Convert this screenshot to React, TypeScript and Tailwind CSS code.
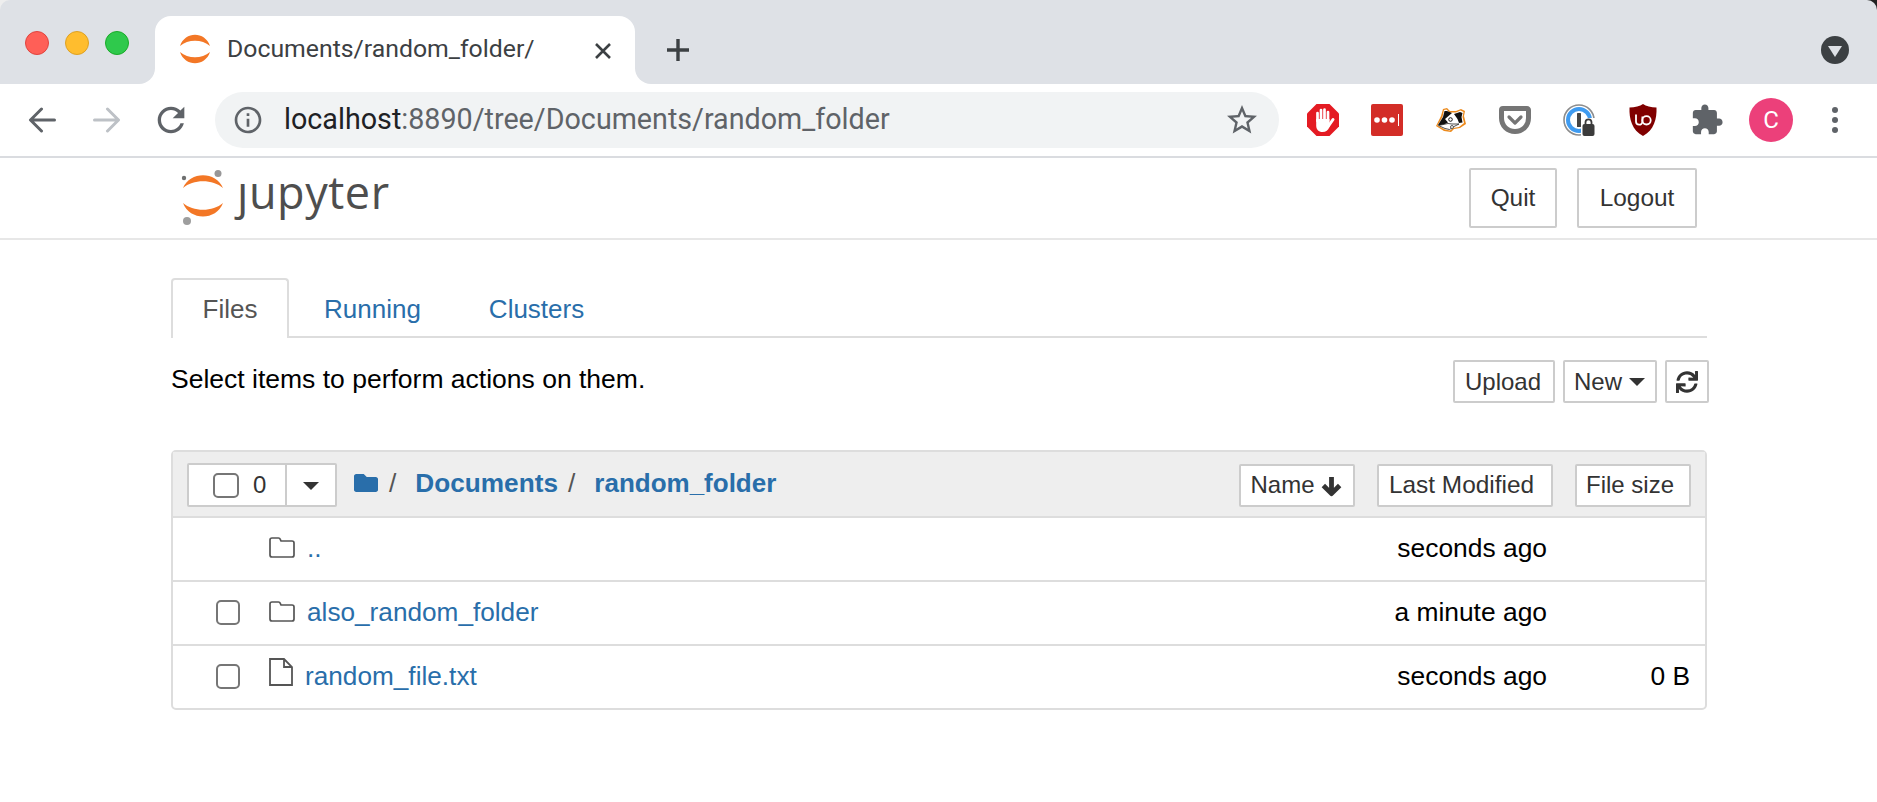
import React from "react";
import { FaSync, FaFolder } from "react-icons/fa";

const Arcs = () => (
  <svg viewBox="0 0 30 30" className="w-[30px] h-[30px]">
    <path d="M0 12C5 -3 25 -3 30 12C22 5 8 5 0 12Z" fill="#f37726" />
    <path d="M0 18C8 25 22 25 30 18C25 33 5 33 0 18Z" fill="#f37726" />
  </svg>
);

const Logo = () => (
  <svg viewBox="0 0 46 56" className="w-[46px] h-[56px]">
    <path d="M3 18C10 1 36 1 43 18C33 9 13 9 3 18Z" fill="#f37726" />
    <path d="M3 33C13 42 33 42 43 33C36 51 10 51 3 33Z" fill="#f37726" />
    <circle cx="38" cy="3.5" r="3.5" fill="#989798" />
    <circle cx="4" cy="8" r="2.2" fill="#6f7070" />
    <circle cx="7" cy="51" r="4" fill="#9e9e9e" />
  </svg>
);

const AdBlock = () => (
  <svg viewBox="0 0 32 32" className="w-8 h-8">
    <path d="M9.5 0H22.5L32 9.5V22.5L22.5 32H9.5L0 22.5V9.5Z" fill="#e41b23" />
    <g stroke="#fff" strokeWidth="2.7" strokeLinecap="round" fill="none">
      <path d="M10.5 17V9M14 16V6M17.5 16V5.5M21 17V8" />
      <path d="M21.5 22L26 15.5" strokeWidth="3" />
    </g>
    <path d="M9.2 15H22.5V23C21 26.5 19 28 15.5 28C11.5 28 9.2 25.5 9.2 21.5Z" fill="#fff" />
  </svg>
);

const LastPass = () => (
  <svg viewBox="0 0 32 32" className="w-8 h-8">
    <rect width="32" height="32" rx="2" fill="#d32d27" />
    <circle cx="6" cy="16" r="2.8" fill="#fff" />
    <circle cx="13.5" cy="16" r="2.8" fill="#fff" />
    <circle cx="21" cy="16" r="2.8" fill="#fff" />
    <rect x="27" y="10" width="1" height="12" fill="#fff" />
  </svg>
);

const Badger = () => (
  <svg viewBox="0 0 32 26" className="w-8 h-[26px]">
    <path d="M1 19L6 9L8 2L12 1L15 4L21 4L26 2L30 4L29 9L31 17L25 21L19 22L16 25L9 24Z" fill="#ec8a1c" />
    <path d="M2.5 18.5L7.5 10L9 3L11.5 2.5L14.5 5.5L21 5.5L25.5 3.5L28.5 5L27.5 10L29 16L24 20L18 21L15 23.5L10 22.5Z" fill="#fff" />
    <path d="M3 18L8 10L9.5 4L12 4L17 6L10 12L13 15.5L8 18Z" fill="#111" />
    <path d="M19 7L25 5L27.5 6L26.5 10L27.5 15.5L24 16L22.5 12Z" fill="#111" />
    <path d="M3.5 18.5L13 16.5L17 17L24 17L18 20L14.5 22.5L10 21.5Z" fill="#fff" stroke="#222" strokeWidth="0.8" />
    <circle cx="15.5" cy="12.5" r="1.8" fill="#fff" stroke="#111" />
    <circle cx="17" cy="20" r="1.5" fill="#fff" stroke="#555" />
  </svg>
);

const Pocket = () => (
  <svg viewBox="0 0 32 28" className="w-8 h-7">
    <path d="M4 2.5H28A1.5 1.5 0 0 1 29.5 4V12C29.5 20 23.5 25.5 16 25.5C8.5 25.5 2.5 20 2.5 12V4A1.5 1.5 0 0 1 4 2.5Z" fill="none" stroke="#757575" strokeWidth="5" />
    <path d="M10 11L16 17L22 11" fill="none" stroke="#757575" strokeWidth="3.2" strokeLinecap="round" strokeLinejoin="round" />
  </svg>
);

const OnePass = () => (
  <svg viewBox="0 0 32 32" className="w-8 h-8">
    <circle cx="16" cy="16" r="15" fill="#fff" stroke="#8c8c8c" strokeWidth="1.6" />
    <circle cx="16" cy="16" r="11" fill="none" stroke="#3f9bf0" strokeWidth="4" />
    <rect x="14" y="9" width="4" height="14" rx="0.5" fill="#444" />
    <rect x="18" y="14" width="14" height="18" fill="#fff" />
    <path d="M22.5 20V18.3A3 3 0 0 1 28.5 18.3V20" fill="none" stroke="#3b3b3b" strokeWidth="1.8" />
    <rect x="19.5" y="20" width="12" height="12" rx="2" fill="#3b3b3b" />
  </svg>
);

const UBlock = () => (
  <svg viewBox="0 0 28 32" className="w-7 h-8">
    <path d="M14 0C17 2 22 3.5 27.5 3.5C28 15 25 26 14 32C3 26 0 15 0.5 3.5C6 3.5 11 2 14 0Z" fill="#800000" />
    <path d="M7 10.5V17.5A3.2 3.2 0 0 0 13.4 17.5V12.5" fill="none" stroke="#fff" strokeWidth="1.8" />
    <circle cx="17.5" cy="16.3" r="4.2" fill="none" stroke="#fff" strokeWidth="1.8" />
  </svg>
);

const G = ({ d, fill = "#5f6368", cls }: { d: string; fill?: string; cls: string }) => (
  <svg viewBox="0 0 24 24" className={cls}>
    <path d={d} fill={fill} />
  </svg>
);

const Arrow = ({ color, flip }: { color: string; flip?: boolean }) => (
  <svg viewBox="0 0 28 26" className={flip ? "w-7 h-[26px] -scale-x-100" : "w-7 h-[26px]"}>
    <path d="M26.5 13H3M13.5 2L2.5 13L13.5 24" fill="none" stroke={color} strokeWidth="3" strokeLinecap="round" strokeLinejoin="round" />
  </svg>
);

const FolderO = () => (
  <svg viewBox="0 0 26 21" className="w-[26px] h-[21px]">
    <path d="M3 1H9.5C10.5 1 11 1.6 11.3 2.4L12 4H23C24.2 4 25 4.8 25 6V18C25 19.2 24.2 20 23 20H3C1.8 20 1 19.2 1 18V3C1 1.8 1.8 1 3 1Z" fill="none" stroke="#555" strokeWidth="1.7" />
  </svg>
);

const FileO = () => (
  <svg viewBox="0 0 24 28" className="w-6 h-7">
    <path d="M1 1H15L23 9V27H1ZM15 1V9H23" fill="none" stroke="#555" strokeWidth="1.8" />
  </svg>
);

const ArrowDownBold = () => (
  <svg viewBox="0 0 24 24" className="w-[23px] h-[23px]">
    <path d="M12 3V20M3.5 12L12 20.5L20.5 12" fill="none" stroke="#333" strokeWidth="5" strokeLinejoin="round" />
  </svg>
);

const Check = ({ cls = "" }: { cls?: string }) => (
  <span className={"block w-6 h-[25px] border-2 border-[#767676] rounded-[5px] bg-white " + cls} />
);

const Btn = ({ cls, children }: { cls: string; children: React.ReactNode }) => (
  <span className={"flex items-center justify-center border-2 border-[#cccccc] bg-white text-[#333] rounded-[2px] " + cls}>
    {children}
  </span>
);

const Caret = () => (
  <span className="block w-0 h-0 border-x-[8px] border-x-transparent border-t-[8px] border-t-[#333]" />
);

const Row = ({
  check,
  icon,
  name,
  gap,
  time,
  size,
  cls,
  iconCls,
}: {
  check: boolean;
  icon: React.ReactNode;
  name: string;
  gap: string;
  time: string;
  size?: string;
  cls: string;
  iconCls: string;
}) => (
  <div className={"flex items-center pl-[43px] pr-[15px] " + cls}>
    <span className="w-[24px] h-[25px] mr-[29px] -mt-[2px]">{check && <Check />}</span>
    <span className={"flex w-[26px] " + iconCls}>{icon}</span>
    <span className={"text-[26.2px] text-[#296eaa] -mt-[1px] " + gap}>{name}</span>
    <span className="ml-auto text-[26.4px] text-black -mt-[1px]">{time}</span>
    <span className="w-[143px] text-right text-[26.4px] text-black -mt-[1px]">{size}</span>
  </div>
);

export default function App() {
  return (
    <div className="w-[1877px] h-[802px] overflow-hidden bg-white font-['Liberation_Sans',Arial,sans-serif]">
      <div className="bg-[linear-gradient(to_right,#eeeeee_50%,#222222_50%)]">
        <div className="h-[84px] bg-[#dee1e6] rounded-t-[10px] flex items-end pl-[25px]">
          <div className="flex gap-4 self-start mt-[31px]">
            <span className="w-6 h-6 rounded-full bg-[#ff5f57] border border-[#e0443e]" />
            <span className="w-6 h-6 rounded-full bg-[#ffbd2e] border border-[#dea123]" />
            <span className="w-6 h-6 rounded-full bg-[#2fc94c] border border-[#1aab29]" />
          </div>
          <div className="relative ml-[26px] w-[480px] h-[68px] bg-white rounded-t-[16px] flex items-center pl-[25px]">
            <span className="absolute bottom-0 -left-4 w-4 h-4 bg-white">
              <span className="block w-4 h-4 bg-[#dee1e6] rounded-br-[16px]" />
            </span>
            <span className="absolute bottom-0 -right-4 w-4 h-4 bg-white">
              <span className="block w-4 h-4 bg-[#dee1e6] rounded-bl-[16px]" />
            </span>
            <span className="-mt-[2px] flex"><Arcs /></span>
            <span className="ml-[18px] text-[24.8px] text-[#3c4043] font-['Roboto',sans-serif] -mt-[2px] -translate-x-[1px]">Documents/random_folder/</span>
            <svg viewBox="0 0 18 18" className="absolute left-[439px] top-[26px] w-[18px] h-[18px]">
              <path d="M2 2L16 16M16 2L2 16" stroke="#3c4043" strokeWidth="2.6" />
            </svg>
          </div>
          <svg viewBox="0 0 24 24" className="self-start mt-[38px] ml-[31px] w-6 h-6">
            <path d="M12 1V23M1 12H23" stroke="#3c4043" strokeWidth="3.4" />
          </svg>
          <span className="self-start mt-[36px] ml-auto mr-[28px] flex items-center justify-center w-7 h-7 rounded-full bg-[#3c4043]">
            <span className="w-0 h-0 mt-[2px] border-x-[7px] border-x-transparent border-t-[11px] border-t-[#dee1e6]" />
          </span>
        </div>
      </div>

      <div className="h-[74px] border-b-2 border-[#dadce0] flex items-center pl-[10px]">
        <span className="w-16 flex justify-center"><Arrow color="#5f6368" /></span>
        <span className="w-16 flex justify-center translate-x-[1px]"><Arrow color="#bdc1c6" flip /></span>
        <span className="w-16 flex justify-center translate-x-[1px]">
          <G cls="w-10 h-10" d="M17.65 6.35C16.2 4.9 14.21 4 12 4c-4.42 0-7.99 3.58-7.99 8s3.57 8 7.99 8c3.73 0 6.84-2.55 7.73-6h-2.08c-.82 2.33-3.04 4-5.65 4-3.31 0-6-2.69-6-6s2.69-6 6-6c1.66 0 3.14.69 4.22 1.78L13 11h7V4l-2.35 2.35z" />
        </span>
        <div className="ml-[13px] w-[1064px] h-[56px] rounded-full bg-[#f1f3f4] flex items-center pl-[17px] pr-[19px]">
          <G cls="w-8 h-8" d="M11 7h2v2h-2zm0 4h2v6h-2zm1-9C6.48 2 2 6.48 2 12s4.48 10 10 10 10-4.48 10-10S17.52 2 12 2zm0 18c-4.41 0-8-3.59-8-8s3.59-8 8-8 8 3.59 8 8-3.59 8-8 8z" />
          <span className="ml-[20px] text-[28.7px] font-['Roboto',sans-serif] text-[#5f6368]">
            <span className="text-[#202124]">localhost</span>:8890/tree/Documents/random_folder
          </span>
          <span className="ml-auto flex">
            <G cls="w-9 h-9" d="M22 9.24l-7.19-.62L12 2 9.19 8.63 2 9.24l5.46 4.73L5.82 21 12 17.27 18.18 21l-1.63-7.03L22 9.24zM12 15.4l-3.76 2.27 1-4.28-3.32-2.88 4.38-.38L12 6.1l1.71 4.04 4.38.38-3.32 2.88 1 4.28L12 15.4z" />
          </span>
        </div>
        <div className="ml-[12px] flex items-center">
          <span className="w-16 flex justify-center"><AdBlock /></span>
          <span className="w-16 flex justify-center"><LastPass /></span>
          <span className="w-16 flex justify-center"><Badger /></span>
          <span className="w-16 flex justify-center"><Pocket /></span>
          <span className="w-16 flex justify-center"><OnePass /></span>
          <span className="w-16 flex justify-center"><UBlock /></span>
          <span className="w-16 flex justify-center">
            <G cls="w-[34px] h-[34px]" d="M20.5 11H19V7c0-1.1-.9-2-2-2h-4V3.5C13 2.12 11.88 1 10.5 1S8 2.12 8 3.5V5H4c-1.1 0-1.99.9-1.99 2v3.8H3.5c1.49 0 2.7 1.21 2.7 2.7s-1.21 2.7-2.7 2.7H2V20c0 1.1.9 2 2 2h3.8v-1.5c0-1.49 1.21-2.7 2.7-2.7 1.49 0 2.7 1.21 2.7 2.7V22H17c1.1 0 2-.9 2-2v-4h1.5c1.38 0 2.5-1.12 2.5-2.5S21.88 11 20.5 11z" />
          </span>
          <span className="w-16 flex justify-center">
            <span className="w-11 h-11 rounded-full bg-[#ec407a] text-white text-[24px] flex items-center justify-center font-['Roboto',sans-serif]">C</span>
          </span>
          <span className="w-16 flex flex-col items-center gap-[4px]">
            <span className="w-[6px] h-[6px] rounded-full bg-[#5f6368]" />
            <span className="w-[6px] h-[6px] rounded-full bg-[#5f6368]" />
            <span className="w-[6px] h-[6px] rounded-full bg-[#5f6368]" />
          </span>
        </div>
      </div>

      <div className="h-[82px] border-b-2 border-[#e7e7e7] flex pl-[180px] pr-[180px]">
        <span className="mt-[12px] flex h-[56px]"><Logo /></span>
        <span className="ml-[11px] mt-[4px] h-[60px] text-[45px] leading-[60px] tracking-[0.55px] text-[#4e4e4e] font-['Open_Sans',sans-serif]">ȷupyter</span>
        <Btn cls="ml-auto mt-[10px] w-[88px] h-[60px] text-[24.4px]">Quit</Btn>
        <Btn cls="ml-[20px] mt-[10px] w-[120px] h-[60px] text-[24.4px]">Logout</Btn>
      </div>

      <div className="pl-[171px] pr-[170px] pt-[38px]">
        <div className="h-[60px] flex border-b-2 border-[#dddddd] text-[26px]">
          <span className="w-[118px] h-[60px] border-x-2 border-t-2 border-[#dddddd] bg-white rounded-t-[4px] flex items-center justify-center text-[#555]">Files</span>
          <span className="ml-[35px] mt-[12px] text-[#296eaa]">Running</span>
          <span className="ml-[68px] mt-[12px] text-[#296eaa]">Clusters</span>
        </div>

        <div className="flex items-center h-[43px] mt-[22px] -mr-[2px] text-[24px]">
          <span className="text-[26.5px] text-black -mt-[3px]">Select items to perform actions on them.</span>
          <Btn cls="ml-auto w-[102px] h-[43px] pr-[2px]">Upload</Btn>
          <Btn cls="ml-[8px] w-[94px] h-[43px] gap-[7px] pr-[1px]">New <Caret /></Btn>
          <Btn cls="ml-[8px] w-[44px] h-[43px]"><FaSync className="w-[22px] h-[22px]" /></Btn>
        </div>

        <div className="mt-[47px] border-2 border-[#dddddd] rounded-[5px]">
          <div className="h-[66px] bg-[#eeeeee] border-b-2 border-[#dddddd] flex items-center pt-[2px] pl-[14px] pr-[14px] text-[24px]">
            <div className="w-[150px] h-[44px] flex border-2 border-[#cccccc] bg-white rounded-[2px]">
              <div className="w-[98px] flex items-center pl-[24px] border-r-2 border-[#cccccc]">
                <Check cls="w-[26px]" />
                <span className="ml-[14px] text-[#333]">0</span>
              </div>
              <div className="flex-1 flex items-center justify-center pt-[2px]"><Caret /></div>
            </div>
            <FaFolder className="ml-[16px] w-[26px] h-[24px] text-[#296eaa] -mt-[4px]" />
            <span className="ml-[10px] text-[26.4px] text-[#555] -mt-[3px]">/</span>
            <span className="ml-[19px] text-[26.2px] font-bold text-[#296eaa] -mt-[3px]">Documents</span>
            <span className="ml-[10px] text-[26.4px] text-[#555] -mt-[3px]">/</span>
            <span className="ml-[19px] text-[26px] font-bold text-[#296eaa] -mt-[3px]">random_folder</span>
            <Btn cls="ml-auto w-[116px] h-[43px] gap-[5px] pr-[1px]">Name <ArrowDownBold /></Btn>
            <Btn cls="ml-[22px] w-[176px] h-[43px] pr-[7px] text-[24.4px]">Last Modified</Btn>
            <Btn cls="ml-[22px] w-[116px] h-[43px] pr-[6px]">File size</Btn>
          </div>
          <Row check={false} icon={<FolderO />} name=".." gap="ml-[12px]" time="seconds ago" cls="h-[64px] border-b-2 border-[#dddddd]" iconCls="-mt-[4px]" />
          <Row check icon={<FolderO />} name="also_random_folder" gap="ml-[12px]" time="a minute ago" cls="h-[64px] border-b-2 border-[#dddddd]" iconCls="-mt-[4px]" />
          <Row check icon={<FileO />} name="random_file.txt" gap="ml-[10px]" time="seconds ago" size="0 B" cls="h-[62px]" iconCls="-mt-[10px]" />
        </div>
      </div>
    </div>
  );
}
